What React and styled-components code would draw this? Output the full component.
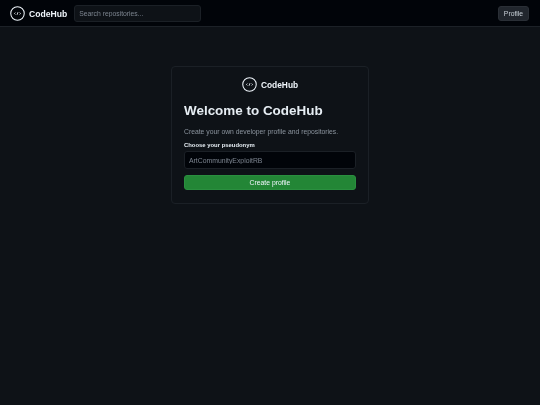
import React from "react";
import styled, { createGlobalStyle } from "styled-components";

const Global = createGlobalStyle`
  html, body { margin: 0; padding: 0; background: #0e1217; }
  body { font-family: "Liberation Sans", Arial, sans-serif; color: #e6edf3; }
  * { box-sizing: border-box; }
`;
const Page = styled.div`
  width: 540px; height: 405px; display: flex; flex-direction: column; background: #0e1217; overflow: hidden;
  filter: blur(0.3px);
`;
const Header = styled.header`
  height: 27px; flex: none; display: flex; align-items: center; justify-content: space-between;
  padding: 1px 11px 0 10px; background: #010409; border-bottom: 1px solid #1c2127;
`;
const Left = styled.div`display: flex; align-items: center; gap: 7px;`;
const Brand = styled.div`
  display: flex; align-items: center; gap: ${p => p.$gap}px; font-weight: 700; font-size: ${p => p.$size}px; color: #f0f6fc;
`;
const Search = styled.input`
  width: 127px; height: 17px; padding: 0 4px; font: 6.8px "Liberation Sans", Arial, sans-serif;
  color: #e6edf3; background: #0e1217; border: 1px solid #1b2026; border-radius: 3px; outline: none;
  &::placeholder { color: #7d8590; opacity: 1; }
`;
const ProfileButton = styled.button`
  height: 15px; width: 31px; padding: 0; font: 6.8px "Liberation Sans", Arial, sans-serif; color: #c9d1d9;
  background: #21262d; border: 1px solid #2a2f36; border-radius: 3px;
`;
const Main = styled.main`display: flex; justify-content: center; padding-top: 39px;`;
const Card = styled.section`
  width: 198px; height: 138px; padding: 10px 12px 0; background: #0e1217; border: 1px solid #1b2026; border-radius: 4px;
  display: flex; flex-direction: column;
`;
const CardBrand = styled.div`display: flex; justify-content: center;`;
const Title = styled.h1`margin: 10px 0 0; font-size: 13.45px; line-height: 18px; font-weight: 700; color: #e6edf3;`;
const Sub = styled.p`margin: 6.5px 0 0; font-size: 6.8px; line-height: 10px; color: #8b949e;`;
const Label = styled.label`margin-top: 4px; font-size: 5.9px; line-height: 9px; font-weight: 700; color: #e6edf3;`;
const NameInput = styled.input`
  margin-top: 1.5px; width: 100%; height: 18px; padding: 0 4px; font: 6.85px "Liberation Sans", Arial, sans-serif;
  background: #010409; border: 1px solid #1b2026; border-radius: 3px; outline: none;
  &::placeholder { color: #7d8590; opacity: 1; }
`;
const Submit = styled.button`
  margin-top: 6px; width: 100%; height: 15px; padding: 0; font: 6.8px "Liberation Sans", Arial, sans-serif; color: #f0f6fc;
  background: #238636; border: 1px solid #2a8f3f; border-radius: 3px;
`;

const Logo = ({ size }) => (
  <svg width={size} height={size} viewBox="0 0 16 16" fill="none" stroke="#f0f6fc">
    <circle cx="8" cy="8" r="7.2" strokeWidth="1.1" />
    <path d="M5.7 7 4.8 8l.9 1M10.3 7l.9 1-.9 1M8.5 6.6 7.5 9.4" strokeWidth="0.9" />
  </svg>
);

export default function App() {
  return (
    <Page>
      <Global />
      <Header>
        <Left>
          <Brand $gap={4} $size={8.6}><Logo size={15} />CodeHub</Brand>
          <Search placeholder="Search repositories..." />
        </Left>
        <ProfileButton>Profile</ProfileButton>
      </Header>
      <Main>
        <Card>
          <CardBrand><Brand $gap={4} $size={8.4}><Logo size={15} />CodeHub</Brand></CardBrand>
          <Title>Welcome to CodeHub</Title>
          <Sub>Create your own developer profile and repositories.</Sub>
          <Label>Choose your pseudonym</Label>
          <NameInput placeholder="ArtCommunityExploitRB" />
          <Submit>Create profile</Submit>
        </Card>
      </Main>
    </Page>
  );
}
